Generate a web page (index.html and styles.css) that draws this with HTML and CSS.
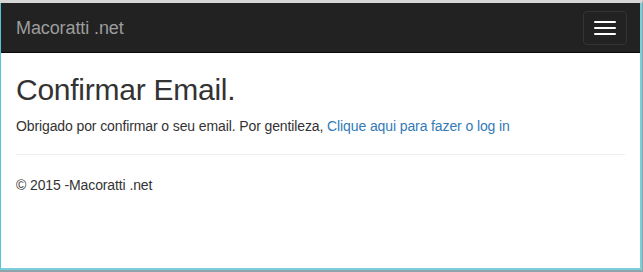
FILE: index.html
```html
<!DOCTYPE html>
<html lang="pt">
<head>
<meta charset="utf-8">
<title>Confirmar Email - Macoratti .net</title>
<link rel="stylesheet" href="styles.css">
</head>
<body>
<div class="window">
  <div class="viewport">
    <nav class="navbar">
      <a class="brand" href="#">Macoratti .net</a>
      <button class="toggle" type="button" aria-label="Menu">
        <span class="bar"></span>
        <span class="bar"></span>
        <span class="bar"></span>
      </button>
    </nav>
    <div class="content">
      <h2 class="title">Confirmar Email.</h2>
      <p class="text">Obrigado por confirmar o seu email. Por gentileza, <a class="link" href="#">Clique aqui para fazer o log in</a></p>
      <hr class="rule">
      <footer class="footer">
        <p class="text">&copy; 2015 -Macoratti .net</p>
      </footer>
    </div>
  </div>
</div>
</body>
</html>
```

FILE: styles.css
```css
html, body {
  margin: 0;
  padding: 0;
  height: 100%;
}
body {
  font-family: "Liberation Sans", Arial, Helvetica, sans-serif;
  font-size: 14px;
  line-height: 20px;
  color: #333;
  background: #fff;
}
.window {
  box-sizing: border-box;
  height: 272px;
  width: 643px;
  border-top: 3px solid #d6d6d6;
  border-right: 1px solid #8fa3ad;
  border-bottom: 2px solid #8fa3ad;
  background: #fff;
}
.viewport {
  box-sizing: border-box;
  height: 100%;
  border-left: 1px solid #5bc3d3;
  border-right: 2px solid #7ccfd9;
  border-bottom: 2px solid #7ccfd9;
  display: flex;
  flex-direction: column;
}
.navbar {
  box-sizing: border-box;
  height: 50px;
  background: #222;
  border-bottom: 1px solid #080808;
  display: flex;
  align-items: flex-start;
  justify-content: space-between;
}
.brand {
  padding: 15px;
  font-size: 18px;
  line-height: 20px;
  color: #9d9d9d;
  text-decoration: none;
  letter-spacing: -0.1px;
}
.toggle {
  margin: 8px 13px 0 0;
  padding: 9px 10px;
  background: transparent;
  border: 1px solid #333;
  border-radius: 4px;
  display: flex;
  flex-direction: column;
  gap: 4px;
  cursor: pointer;
}
.bar {
  display: block;
  width: 22px;
  height: 2px;
  border-radius: 1px;
  background: #fff;
}
.content {
  padding: 0 15px;
}
.title {
  margin: 20px 0 10px;
  font-size: 30px;
  font-weight: 500;
  line-height: 33px;
  letter-spacing: -0.25px;
}
.text {
  margin: 0 0 10px;
  letter-spacing: -0.11px;
}
.link {
  color: #337ab7;
  text-decoration: none;
}
.rule {
  margin: 18px 0 20px;
  border: 0;
  border-top: 1px solid #eee;
}
.footer .text {
  margin: 0;
}
```
